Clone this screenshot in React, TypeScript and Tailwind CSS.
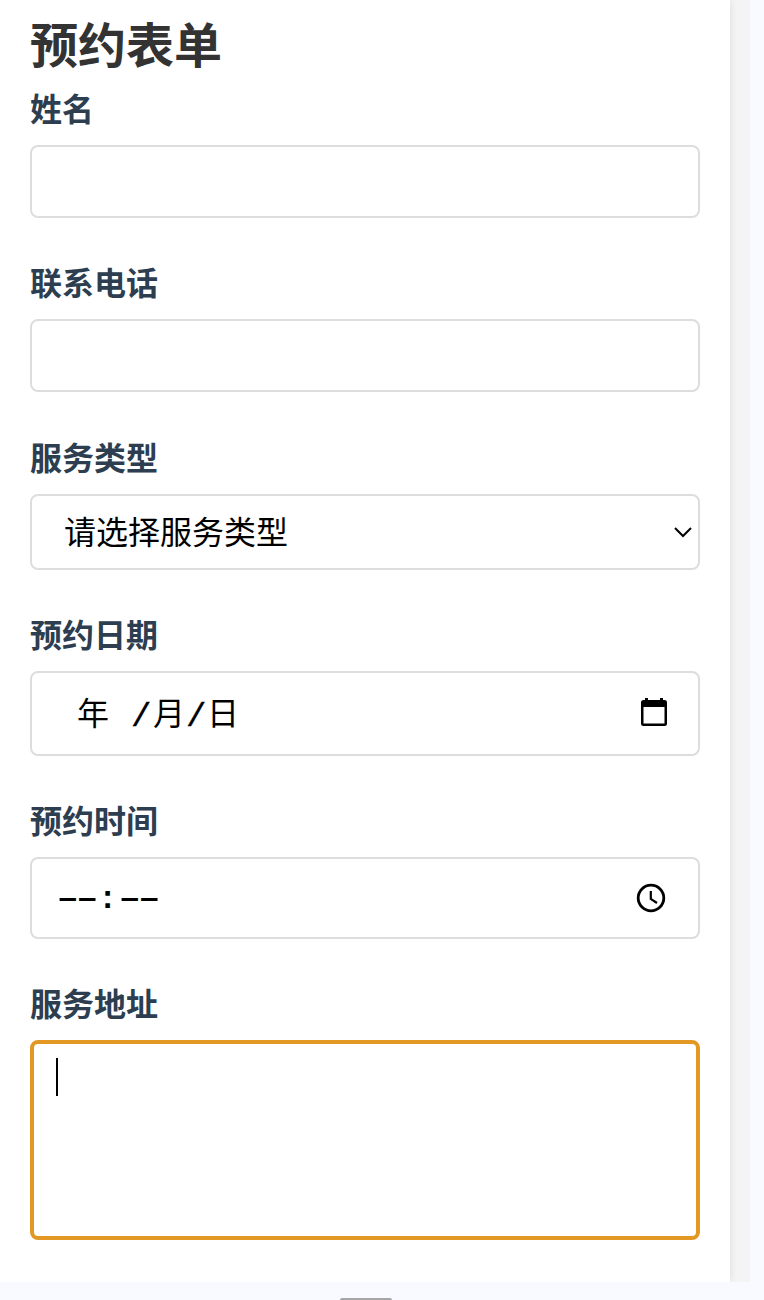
import type { ReactNode } from "react";

function Field({ label, className, children }: { label: string; className: string; children?: ReactNode }) {
  return (
    <div>
      <div className="mb-[11px] h-12 text-[32px] font-bold leading-[42px] text-[#2c3e50]">
        {label}
      </div>
      <div className={`flex items-center rounded-lg bg-white ${className}`}>{children}</div>
    </div>
  );
}

function Slash() {
  return (
    <span className="w-[21px] pt-[6px] font-['Liberation_Mono',monospace] text-[34px] [-webkit-text-stroke:0.4px_#000]">
      /
    </span>
  );
}

function Dashes() {
  return <span className="w-[38px] font-['Noto_Sans',sans-serif] text-[39px] leading-[42px]">––</span>;
}

function ChevronIcon() {
  return (
    <svg width="18" height="12" viewBox="0 0 18 12" fill="none" className="ml-auto mr-[6px]">
      <path d="M1 2 9 10l8-8" stroke="#000" strokeWidth="2" />
    </svg>
  );
}

function CalendarIcon() {
  return (
    <svg width="26" height="28" viewBox="0 0 26 28" className="mb-[3px] ml-auto mr-[31px]">
      <path
        fillRule="evenodd"
        d="M4 0h3v2h12V0h3v2h1.500Q26 2 26 4.500v21Q26 28 23.500 28h-21Q0 28 0 25.500v-21Q0 2 2.500 2H4zM2.500 9v16.500h21V9z"
      />
    </svg>
  );
}

function ClockIcon() {
  return (
    <svg width="30" height="30" viewBox="0 0 30 30" fill="none" stroke="#000" className="ml-auto mr-[32px]">
      <circle cx="15" cy="15" r="12.800" strokeWidth="2.800" />
      <path d="M14.800 8v8l6.200 4" strokeWidth="2.200" />
    </svg>
  );
}

export default function App() {
  return (
    <div className="flex h-[1300px] w-[764px] flex-col overflow-hidden bg-[#f8faff] font-['Noto_Sans_CJK_SC',sans-serif]">
      <div className="h-[1282px] w-[750px] shrink-0 overflow-hidden bg-[#f4f4f4]">
        <main className="h-[1282px] w-[730px] bg-white px-[30px] pt-[10px] shadow-[0_0_8px_rgba(0,0,0,0.1)]">
          <h1 className="h-[76px] text-[48px] font-bold leading-[64px] text-[#333]">预约表单</h1>
          <form>
            <Field label="姓名" className="mb-[42px] h-[73px] border-2 border-[#ddd]" />
            <Field label="联系电话" className="mb-[43px] h-[73px] border-2 border-[#ddd]" />
            <Field label="服务类型" className="mb-[42px] h-[76px] border-2 border-[#ddd]">
              <span className="pb-[5px] pl-8 text-[32px] leading-[48px] text-black">请选择服务类型</span>
              <ChevronIcon />
            </Field>
            <Field label="预约日期" className="mb-[42px] h-[85px] border-2 border-[#ddd]">
              <div className="flex h-[48px] pl-[45px] text-[32px] leading-[42px] text-black">
                <span className="w-[54px]">年</span>
                <Slash />
                <span className="w-[34px] pl-px">月</span>
                <Slash />
                <span>日</span>
              </div>
              <CalendarIcon />
            </Field>
            <Field label="预约时间" className="mb-[42px] h-[82px] border-2 border-[#ddd]">
              <div className="flex h-[48px] pl-[26px] text-[32px] leading-[48px] text-black">
                <Dashes />
                <span className="w-[24px] pl-[2px] pt-[2px] font-['Liberation_Mono',monospace] font-bold">:</span>
                <Dashes />
              </div>
              <ClockIcon />
            </Field>
            <Field label="服务地址" className="h-[200px] border-4 border-[#e39824]">
              <span className="mb-auto ml-[22px] mt-[14px] h-[38px] w-[2px] bg-black" />
            </Field>
          </form>
        </main>
      </div>
      <div className="ml-[340px] mt-4 h-1 w-[52px] shrink-0 rounded-sm bg-[#a5a5a5]" />
    </div>
  );
}
